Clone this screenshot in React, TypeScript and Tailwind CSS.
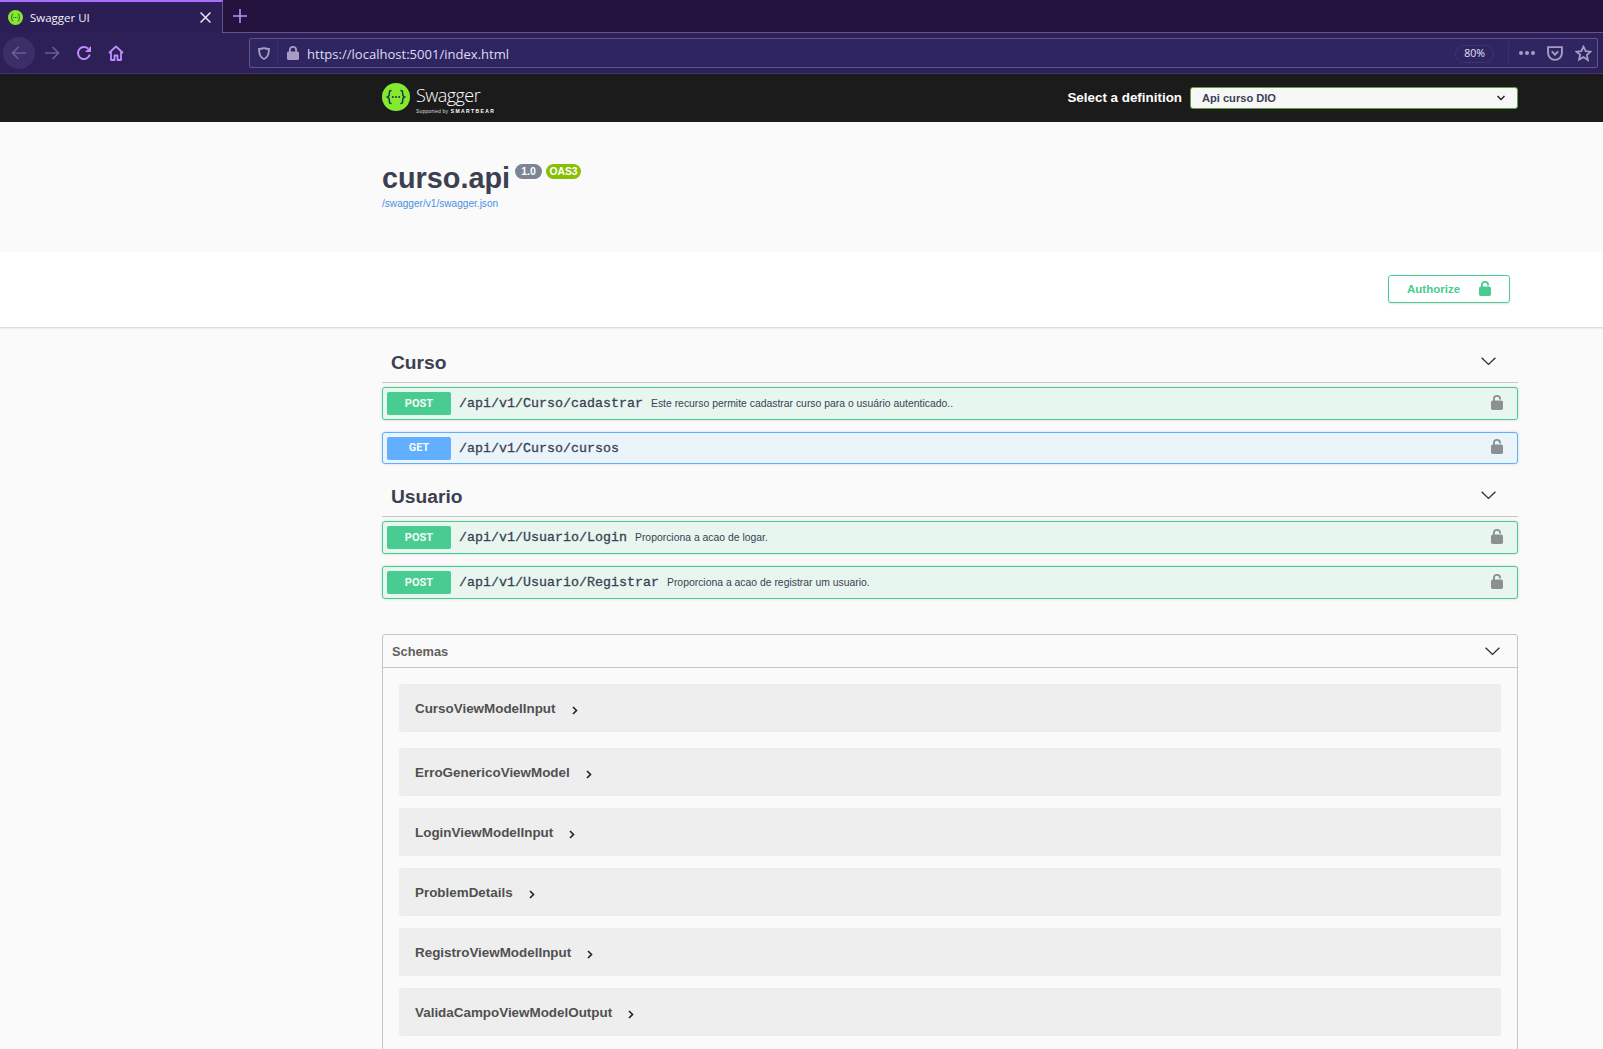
import React from "react";

const Lock = ({ color }: { color: string }) => (
  <svg width="12" height="15" viewBox="0 0 12 15" fill={color}>
    <rect x="0" y="5.500" width="12" height="9.500" rx="1.800" />
    <path d="M2 6.500V4a4 4 0 0 1 8 0V4.600H8.200V4a2.200 2.200 0 0 0-4.400 0V6.500z" />
  </svg>
);

const Chevron = () => (
  <svg width="15" height="9" viewBox="0 0 15 9" fill="none" stroke="#2b2b2b" strokeWidth="1.300">
    <path d="M0.600 0.800 7.500 7.400 14.400 0.800" />
  </svg>
);

const SwaggerMark = ({ size }: { size: number }) => (
  <svg width={size} height={size} viewBox="0 0 28 28">
    <circle cx="14" cy="14" r="14" fill="#85ea2d" />
    <path
      d="M9.600 7.500c-2.400 0-2.200 1.200-2.200 3 0 1.900-.4 2.900-1.800 3.500 1.400.6 1.800 1.600 1.800 3.500 0 1.800-.2 3 2.200 3M18.400 7.500c2.400 0 2.200 1.200 2.200 3 0 1.900.4 2.900 1.800 3.500-1.400.6-1.800 1.600-1.800 3.500 0 1.800.2 3-2.200 3"
      fill="none"
      stroke="#173647"
      strokeWidth="1.500"
    />
    <circle cx="10.800" cy="14" r="1" fill="#173647" />
    <circle cx="14" cy="14" r="1" fill="#173647" />
    <circle cx="17.200" cy="14" r="1" fill="#173647" />
  </svg>
);

const Op = ({ method, path, desc, mb = "mb-3", h = "h-[33px]" }: { method: string; path: string; desc?: string; mb?: string; h?: string }) => {
  const post = method === "POST";
  return (
    <div
      className={`flex items-center rounded-[3px] border pl-[4px] pr-[14px] shadow-[0_0_3px_rgba(0,0,0,0.15)] ${h} ${mb} ${
        post ? "border-[#49cc90] bg-[#e8f6f0]" : "border-[#61affe] bg-[#ebf3fb]"
      }`}
    >
      <span
        className={`w-[64px] h-[23px] pt-[1px] rounded-[2px] flex items-center justify-center text-[11px] font-bold text-[#f4fbf8] [font-family:'Roboto',sans-serif] ${
          post ? "bg-[#49cc90]" : "bg-[#61affe]"
        }`}
      >
        {method}
      </span>
      <span
        className={`ml-[8px] text-[13.330px] text-[#3b4151] whitespace-nowrap [-webkit-text-stroke:0.3px_#3b4151] [font-family:'Liberation_Mono',monospace] ${
          post ? "" : "mt-[1px]"
        }`}
      >
        {path}
      </span>
      {desc && <span className="ml-[8px] text-[10.400px] text-[#3b4151] whitespace-nowrap">{desc}</span>}
      <span className="ml-auto flex -mt-[3px]">
        <Lock color={post ? "#8a918e" : "#8b9095"} />
      </span>
    </div>
  );
};

const TagHeader = ({ name }: { name: string }) => (
  <div className="flex items-center justify-between h-[42px] border-b border-[#c4c5c8] pl-[8px] pr-[22px] mb-[4px]">
    <h3 className="ml-[1px] mt-[4px] text-[19.200px] font-bold text-[#3b4151]">{name}</h3>
    <Chevron />
  </div>
);

const Model = ({ name, mt }: { name: string; mt: string }) => (
  <div className={`flex items-center h-[48px] bg-[#eeeeee] rounded-[3px] pl-[16px] ${mt}`}>
    <span className="mt-[2px] text-[13.420px] font-bold text-[#505050]">{name}</span>
    <svg className="ml-[16px] mt-[4px]" width="6" height="9" viewBox="0 0 6 9" fill="none" stroke="#222" strokeWidth="1.600">
      <path d="M1 1l3.500 3.500L1 8" />
    </svg>
  </div>
);

export default function App() {
  return (
    <div className="w-[1603px] h-[1049px] overflow-hidden bg-[#fafafa] [font-family:'Liberation_Sans',sans-serif]">
      {/* Browser tab strip */}
      <div className="flex h-[33px] bg-[#25133f] border-b border-[#63548f]">
        <div className="w-[223px] h-[33px] bg-[#2b1e55] border-t-2 border-[#a970ff] border-r border-r-[#63548f] flex items-center pl-[8px] pr-[11px]">
          <SwaggerMark size={15} />
          <span className="ml-[7px] text-[11.500px] text-[#f2f0fa] [font-family:'Open_Sans',sans-serif]">Swagger UI</span>
          <svg className="ml-auto" width="11" height="11" viewBox="0 0 10 10" stroke="#e8e4f4" strokeWidth="1.400">
            <path d="M0.500.5l9 9M9.500.5l-9 9" />
          </svg>
        </div>
        <svg className="ml-[10px] mt-[9px]" width="14" height="14" viewBox="0 0 14 14" stroke="#c18bff" strokeWidth="1.600">
          <path d="M7 0v14M0 7h14" />
        </svg>
      </div>

      {/* Toolbar */}
      <div className="flex items-center h-[41px] bg-[#2c2057] border-b border-[#42367a]">
        <div className="w-[32px] h-[32px] ml-[3px] rounded-full bg-[#3c2f68] flex items-center justify-center">
          <svg width="16" height="14" viewBox="0 0 16 14" fill="none" stroke="#6c5a9c" strokeWidth="1.700">
            <path d="M15 7H1.500M7.500 1 1.500 7l6 6" />
          </svg>
        </div>
        <svg className="ml-[9px]" width="16" height="14" viewBox="0 0 16 14" fill="none" stroke="#6c5a9c" strokeWidth="1.700">
          <path d="M1 7h13.500M8.500 1l6 6-6 6" />
        </svg>
        <svg className="ml-[16px]" width="16" height="16" viewBox="0 0 16 16" fill="none" stroke="#c18bff" strokeWidth="2">
          <path d="M13.800 9.500A6 6 0 1 1 12 3.600" />
          <path d="M15 1v6H9z" fill="#c18bff" stroke="none" />
        </svg>
        <svg className="ml-[16px]" width="16" height="16" viewBox="0 0 16 16" fill="none" stroke="#c18bff" strokeWidth="1.800" strokeLinejoin="round">
          <path d="M1 8l7-6.500L15 8M3 6.500V15h3.500v-4.500h3V15H13V6.500" />
        </svg>
        <div className="ml-[125px] mr-[5px] flex-1 h-[30px] bg-[#2f2661] border border-[#5f5390] rounded-[2px] flex items-center">
          <div className="w-[28px] flex justify-center border-r border-[#3a3070] h-[24px] items-center">
            <svg width="12" height="13" viewBox="0 0 12 13" fill="none" stroke="#a79cc4" strokeWidth="1.800">
              <path d="M1 2c3 0 4-.6 5-1 1 .4 2 1 5 1 0 5-1 8.500-5 10C2 10.500 1 7 1 2z" />
            </svg>
          </div>
          <svg className="ml-[9px]" width="12" height="14" viewBox="0 0 12 14" fill="#a79cc4">
            <rect x="0" y="5.500" width="12" height="8.500" rx="1.500" />
            <path d="M2 6V4a4 4 0 0 1 8 0v2H8.200V4a2.200 2.200 0 0 0-4.400 0v2z" />
          </svg>
          <span className="ml-[8px] mt-[3px] text-[13.050px] text-[#dcdcf5] [font-family:'Open_Sans',sans-serif]">
            https://localhost:5001/index.html
          </span>
          <span className="ml-auto mt-[1px] w-[39px] h-[18px] pt-[1px] rounded-full border border-[#3e3570] flex items-center justify-center text-[10.500px] text-[#e3e0f5] [font-family:'Open_Sans',sans-serif]">
            80%
          </span>
          <div className="ml-[14px] w-px h-[22px] bg-[#3a3070]" />
          <span className="ml-[10px] flex gap-[2px]">
            <i className="w-[4px] h-[4px] rounded-full bg-[#a79cc4]" />
            <i className="w-[4px] h-[4px] rounded-full bg-[#a79cc4]" />
            <i className="w-[4px] h-[4px] rounded-full bg-[#a79cc4]" />
          </span>
          <svg className="ml-[12px]" width="16" height="15" viewBox="0 0 15 14" fill="none" stroke="#a79cc4" strokeWidth="1.800">
            <path d="M1 1h13v5.500a6.500 6.500 0 0 1-13 0z" />
            <path d="M4.500 5l3 3 3-3" />
          </svg>
          <svg className="ml-[12px] mr-[5px]" width="17" height="17" viewBox="0 0 16 16" fill="none" stroke="#a79cc4" strokeWidth="1.700">
            <path d="M8 1.500l2 4.300 4.600.5-3.400 3.200.9 4.700L8 11.400l-4.100 2.300.9-4.700L1.400 6.300 6 5.800z" />
          </svg>
        </div>
      </div>

      {/* Swagger bar */}
      <div className="h-[48px] bg-[#1b1b1b]">
        <div className="w-[1136px] ml-[382px] h-full flex items-center">
          <span className="flex -mt-[3px]">
            <SwaggerMark size={28} />
          </span>
          <div className="ml-[6px] mt-[3px] flex flex-col">
            <span className="text-[18px] leading-[20px] tracking-[-0.550px] font-light text-white [font-family:'Open_Sans',sans-serif]">Swagger</span>
            <span className="mt-[3px] text-[5px] leading-[6px] tracking-[0.200px] text-[#dddddd] whitespace-nowrap">
              Supported by <b className="tracking-[1.400px] ml-[1px] text-white">SMARTBEAR</b>
            </span>
          </div>
          <span className="ml-auto text-[13.400px] font-bold text-white">Select a definition</span>
          <div className="ml-[8px] w-[328px] h-[22px] bg-[#f7f7f7] border-[1.500px] border-[#62a03f] rounded-[3px] flex items-center justify-between pl-[11px] pr-[12px]">
            <span className="mt-[1px] text-[11.100px] font-bold text-[#3b4151]">Api curso DIO</span>
            <svg width="8" height="6" viewBox="0 0 8 6" fill="none" stroke="#222" strokeWidth="1.500">
              <path d="M.5 1l3.500 3.500L7.500 1" />
            </svg>
          </div>
        </div>
      </div>

      {/* Info */}
      <div className="h-[130px] bg-[#fafafa]">
        <div className="ml-[382px] pt-[41px]">
          <div className="flex items-start">
            <h2 className="text-[28.800px] leading-[30px] font-bold text-[#3b4151]">curso.api</h2>
            <span className="ml-[5px] mt-[1px] h-[15px] w-[27px] justify-center rounded-full bg-[#7d8492] text-white text-[10.500px] font-bold flex items-center">1.0</span>
            <span className="ml-[4px] mt-[1px] h-[15px] w-[35px] justify-center rounded-full bg-[#89bf04] text-white text-[10.300px] font-bold flex items-center">OAS3</span>
          </div>
          <div className="mt-[3px] text-[10.100px] text-[#4990e2]">/swagger/v1/swagger.json</div>
        </div>
      </div>

      {/* Authorize */}
      <div className="h-[76px] bg-white border-b border-[#dedede] shadow-[0_1px_1px_rgba(0,0,0,0.05)]">
        <div className="w-[1136px] ml-[382px] h-full flex justify-end pt-[23px] pr-[8px]">
          <div className="w-[122px] h-[28px] border border-[#49cc90] rounded-[3px] flex items-center pl-[18px] shadow-[0_1px_2px_rgba(0,0,0,0.12)]">
            <span className="mt-[1px] text-[11.500px] font-bold text-[#49cc90]">Authorize</span>
            <span className="ml-[19px] flex -mt-[2px]">
              <Lock color="#49cc90" />
            </span>
          </div>
        </div>
      </div>

      {/* Operations */}
      <div className="w-[1136px] ml-[382px] pt-[13px]">
        <TagHeader name="Curso" />
        <Op method="POST" path="/api/v1/Curso/cadastrar" desc="Este recurso permite cadastrar curso para o usuário autenticado.." />
        <Op method="GET" path="/api/v1/Curso/cursos" mb="mb-[11px]" h="h-[32px]" />
        <TagHeader name="Usuario" />
        <Op method="POST" path="/api/v1/Usuario/Login" desc="Proporciona a acao de logar." />
        <Op method="POST" path="/api/v1/Usuario/Registrar" desc="Proporciona a acao de registrar um usuario." mb="mb-[35px]" />

        <section className="border border-[#c4c5c8] rounded-[3px] pb-[40px]">
          <div className="flex items-center justify-between h-[33px] border-b border-[#c4c5c8] pl-[9px] pr-[17px]">
            <span className="mt-[1px] text-[12.800px] font-bold text-[#606060]">Schemas</span>
            <Chevron />
          </div>
          <div className="px-[16px] pt-[16px]">
            <Model name="CursoViewModelInput" mt="" />
            <Model name="ErroGenericoViewModel" mt="mt-[16px]" />
            <Model name="LoginViewModelInput" mt="mt-[12px]" />
            <Model name="ProblemDetails" mt="mt-[12px]" />
            <Model name="RegistroViewModelInput" mt="mt-[12px]" />
            <Model name="ValidaCampoViewModelOutput" mt="mt-[12px]" />
          </div>
        </section>
      </div>
    </div>
  );
}
